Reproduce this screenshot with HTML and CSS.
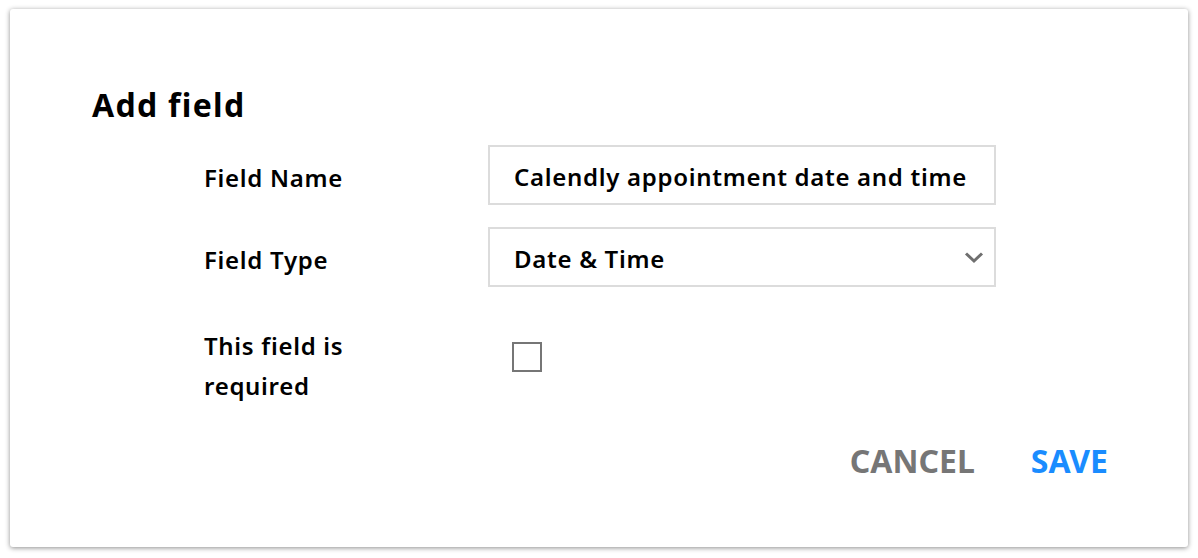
FILE: index.html
```html
<!DOCTYPE html>
<html>
<head>
<meta charset="utf-8">
<link rel="stylesheet" href="styles.css">
</head>
<body>
<div class="card">
  <h1 class="title">Add field</h1>
  <div class="form">
    <div class="row">
      <div class="label">Field Name</div>
      <div class="input">Calendly appointment date and time</div>
    </div>
    <div class="row">
      <div class="label">Field Type</div>
      <div class="input select">
        <span>Date &amp; Time</span>
        <svg class="chev" width="20" height="13" viewBox="0 0 20 13"><path d="M2 2.5 L10 10 L18 2.5" fill="none" stroke="#6f6f6f" stroke-width="3"/></svg>
      </div>
    </div>
    <div class="row row-check">
      <div class="label">This field is<br>required</div>
      <div class="check"></div>
    </div>
  </div>
  <div class="actions">
    <button class="btn cancel">CANCEL</button>
    <button class="btn save">SAVE</button>
  </div>
</div>
</body>
</html>
```
FILE: styles.css
```css
html, body {
  margin: 0;
  padding: 0;
  background: #ffffff;
}
body {
  padding: 9px 10px 11px 10px;
  font-family: "Noto Sans", "Open Sans", sans-serif;
  color: #000;
}
.card {
  box-sizing: border-box;
  width: 1178px;
  height: 538px;
  background: #fff;
  border-radius: 3px;
  box-shadow: 0 1px 5px rgba(0, 0, 0, 0.45);
  padding: 80px 80px 0 82px;
}
.title {
  margin: 0;
  font-size: 32px;
  font-weight: 700;
  line-height: 32px;
  height: 32px;
  letter-spacing: 1.3px;
}
.form {
  margin-top: 24px;
  padding-left: 112px;
  display: flex;
  flex-direction: column;
  gap: 22px;
}
.row {
  display: flex;
  align-items: center;
}
.label {
  width: 284px;
  font-size: 24px;
  font-weight: 600;
  line-height: 40px;
  padding-top: 5px;
  letter-spacing: 0.7px;
}
.input {
  box-sizing: border-box;
  width: 508px;
  height: 60px;
  border: 2px solid #dcdcdc;
  padding: 3px 10px 0 24px;
  display: flex;
  align-items: center;
  font-size: 24px;
  font-weight: 600;
  letter-spacing: 0.7px;
}
.select {
  justify-content: space-between;
}
.chev {
  margin-top: -3px;
}
.row-check {
  align-items: flex-start;
  margin-top: 12px;
}
.check {
  box-sizing: border-box;
  width: 30px;
  height: 30px;
  border: 2px solid #767676;
  margin-left: 24px;
  margin-top: 21px;
}
.actions {
  display: flex;
  justify-content: flex-end;
  gap: 56px;
  margin-top: 35px;
}
.btn {
  background: none;
  border: none;
  padding: 0;
  font-family: "Noto Sans", "Open Sans", sans-serif;
  font-size: 32px;
  font-weight: 700;
  line-height: 40px;
}
.cancel { color: #767676; }
.save { color: #1a8cff; }
```
